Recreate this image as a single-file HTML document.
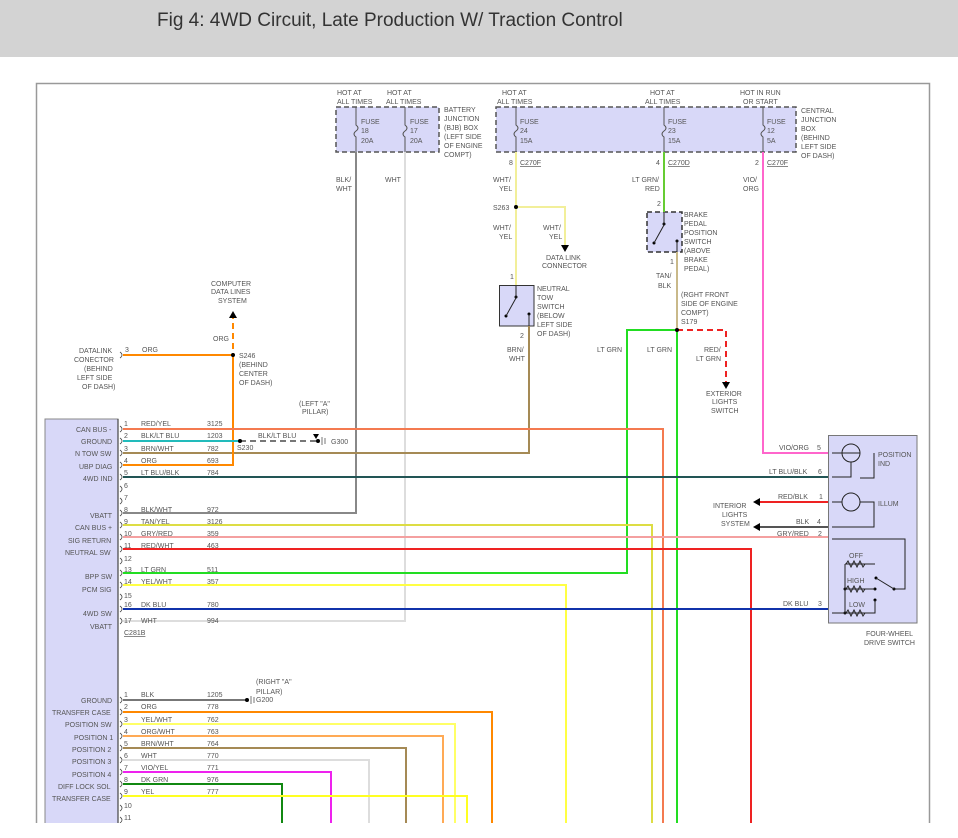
<!DOCTYPE html>
<html><head><meta charset="utf-8"><style>
html,body{margin:0;padding:0;background:#fff;width:958px;height:838px;overflow:hidden}
.hdr{position:absolute;left:0;top:0;width:958px;height:57px;background:#d3d3d3}
.hdr span{position:absolute;left:157px;top:10px;font:19px "Liberation Sans",sans-serif;color:#333;white-space:nowrap}
svg{position:absolute;left:0;top:0;display:block}
text{font-family:"Liberation Sans",sans-serif;font-size:7px;fill:#555}
</style></head><body>
<div class="hdr"><span>Fig 4: 4WD Circuit, Late Production W/ Traction Control</span></div>
<svg width="958" height="838" viewBox="0 0 958 838">
<defs><clipPath id="c"><rect x="0" y="0" width="958" height="823"/></clipPath></defs>
<g clip-path="url(#c)">
<path d="M36.5 838 V83.5 H929.5 V838" fill="none" stroke="#999" stroke-width="1.5"/>
<rect x="336" y="107" width="103" height="45" fill="#d8d8f8" stroke="#555" stroke-dasharray="5,3" stroke-width="1.5"/>
<rect x="496" y="107" width="300" height="45" fill="#d8d8f8" stroke="#555" stroke-dasharray="5,3" stroke-width="1.5"/>
<rect x="647" y="212" width="35" height="40" fill="#d8d8f8" stroke="#333" stroke-dasharray="5,3" stroke-width="1.5"/>
<rect x="499.5" y="285.5" width="34.5" height="40.5" fill="#d8d8f8" stroke="#333" stroke-width="1"/>
<rect x="45" y="419" width="73" height="419" fill="#d8d8f8" stroke="#888" stroke-width="1"/>
<line x1="118" y1="419" x2="118" y2="838" stroke="#444" stroke-width="1.2"/>
<rect x="828.5" y="435.5" width="88.5" height="187.5" fill="#d8d8f8" stroke="#777" stroke-width="1"/>
<g stroke="#555" stroke-width="1" fill="none">
<path d="M356 107 V125 q4 3 0 6 q-4 3 0 6 V152"/>
<path d="M405 107 V125 q4 3 0 6 q-4 3 0 6 V152"/>
<path d="M516 107 V125 q4 3 0 6 q-4 3 0 6 V152"/>
<path d="M664 107 V125 q4 3 0 6 q-4 3 0 6 V152"/>
<path d="M763 107 V125 q4 3 0 6 q-4 3 0 6 V152"/>
</g>
<g fill="none" stroke-width="2">
<path d="M356 152 V513 H123" stroke="#888"/>
<path d="M405 152 V621 H123" stroke="#ddd"/>
<path d="M516 152 V285" stroke="#f2ef9a"/>
<path d="M516 207 H565 V245" stroke="#f2ef9a"/>
<path d="M664 152 V212" stroke="#6c3"/>
<path d="M763 152 V453 H828" stroke="#f6c"/>
<path d="M529 326 V453 H123" stroke="#a58a55"/>
<path d="M677 252 V330" stroke="#c9b98a"/>
<path d="M677 330 V838" stroke="#2d2"/>
<path d="M677 330 H627 V573 H123" stroke="#2d2"/>
<path d="M677 330 H726 V382" stroke="#e22" stroke-dasharray="6,4"/>
<path d="M233 313 V355" stroke="#f80" stroke-dasharray="6,4"/>
<path d="M123 355 H233 V465 H123" stroke="#f80"/>
<path d="M123 429 H663 V838" stroke="#f47a50"/>
<path d="M123 441 H240" stroke="#2bb"/>
<path d="M240 441 H318" stroke="#777" stroke-dasharray="6,4"/>
<path d="M123 477 H828" stroke="#255"/>
<path d="M123 525 H652 V838" stroke="#dd4"/>
<path d="M123 537 H828" stroke="#f4a0a0"/>
<path d="M123 549 H751 V838" stroke="#e22"/>
<path d="M123 585 H566 V838" stroke="#ff4"/>
<path d="M123 609 H828" stroke="#13a"/>
<path d="M760 502 H828" stroke="#e22"/>
<path d="M760 527 H828" stroke="#555"/>
<path d="M123 700 H247" stroke="#777"/>
<path d="M123 712 H492 V838" stroke="#f80"/>
<path d="M123 724 H455 V838" stroke="#ff6"/>
<path d="M123 736 H443 V838" stroke="#fa5"/>
<path d="M123 748 H406 V838" stroke="#a58a55"/>
<path d="M123 760 H369 V838" stroke="#ddd"/>
<path d="M123 772 H331 V838" stroke="#e2e"/>
<path d="M123 784 H282 V838" stroke="#181"/>
<path d="M123 796 H467 V838" stroke="#ff2"/>
</g>
<g fill="#000">
<circle cx="516" cy="207" r="2"/><circle cx="233" cy="355" r="2"/><circle cx="677" cy="330" r="2"/>
<circle cx="240" cy="441" r="2"/><circle cx="318" cy="441" r="2"/><circle cx="247" cy="700" r="2"/>
<path d="M561 245 h8 l-4 7z"/><path d="M722 382 h8 l-4 7z"/><path d="M229 318 h8 l-4 -7z"/>
<path d="M313 434 h6 l-3 5z"/>
<path d="M760 498 v8 l-7 -4z"/><path d="M760 523 v8 l-7 -4z"/>
<circle cx="516" cy="297" r="1.5"/><circle cx="506" cy="316" r="1.5"/><circle cx="529" cy="314" r="1.5"/>
<circle cx="664" cy="224" r="1.5"/><circle cx="654" cy="243" r="1.5"/><circle cx="677" cy="241" r="1.5"/>
<circle cx="845" cy="589" r="1.5"/><circle cx="845" cy="613" r="1.5"/><circle cx="875" cy="589" r="1.5"/><circle cx="876" cy="578" r="1.5"/><circle cx="894" cy="589" r="1.5"/><circle cx="875" cy="600" r="1.5"/>
</g>
<path d="M322 437 v8 M325 438 v6 M251 696 v8 M254 697 v6" stroke="#777"/>
<g stroke="#222" stroke-width="1" fill="none">
<path d="M516 286 v12 l-10 18 M529 326 v-12"/><path d="M664 213 v12 l-10 18 M677 252 v-12"/>
<circle cx="851" cy="453" r="9"/><circle cx="851" cy="502" r="9"/>
<path d="M832 453 h28 M851 462 V477 H832 M874 453 V478 H860 M832 502 h10 M860 502 h14 V527 H832"/>
<path d="M832 539 H905 V589 H894 L876 578 M845 564 H875 M845 564 V613 M845 589 H875 M845 613 H875 V600 M832 613 H845"/>
<path d="M846 564 l2 -3 l3 6 l3 -6 l3 6 l3 -6 l3 6 l2 -3 M846 589 l2 -3 l3 6 l3 -6 l3 6 l3 -6 l3 6 l2 -3 M846 613 l2 -3 l3 6 l3 -6 l3 6 l3 -6 l3 6 l2 -3"/>
</g>
<g stroke="#444" fill="none" stroke-width="0.8">
<path d="M120 426 q4 3 0 6 M120 438 q4 3 0 6 M120 450 q4 3 0 6 M120 462 q4 3 0 6 M120 474 q4 3 0 6 M120 486 q4 3 0 6 M120 498 q4 3 0 6 M120 510 q4 3 0 6 M120 522 q4 3 0 6 M120 534 q4 3 0 6 M120 546 q4 3 0 6 M120 558 q4 3 0 6 M120 570 q4 3 0 6 M120 582 q4 3 0 6 M120 594 q4 3 0 6 M120 606 q4 3 0 6 M120 618 q4 3 0 6"/>
<path d="M120 697 q4 3 0 6 M120 709 q4 3 0 6 M120 721 q4 3 0 6 M120 733 q4 3 0 6 M120 745 q4 3 0 6 M120 757 q4 3 0 6 M120 769 q4 3 0 6 M120 781 q4 3 0 6 M120 793 q4 3 0 6 M120 805 q4 3 0 6 M120 817 q4 3 0 6 M120 352 q4 3 0 6"/>
</g>
</g>
<g>
<text x="337" y="95">HOT AT</text><text x="337" y="104">ALL TIMES</text>
<text x="387" y="95">HOT AT</text><text x="386" y="104">ALL TIMES</text>
<text x="502" y="95">HOT AT</text><text x="497" y="104">ALL TIMES</text>
<text x="650" y="95">HOT AT</text><text x="645" y="104">ALL TIMES</text>
<text x="740" y="95">HOT IN RUN</text><text x="743" y="104">OR START</text>
<text x="361" y="124">FUSE</text><text x="361" y="133">18</text><text x="361" y="143">20A</text>
<text x="410" y="124">FUSE</text><text x="410" y="133">17</text><text x="410" y="143">20A</text>
<text x="520" y="124">FUSE</text><text x="520" y="133">24</text><text x="520" y="143">15A</text>
<text x="668" y="124">FUSE</text><text x="668" y="133">23</text><text x="668" y="143">15A</text>
<text x="767" y="124">FUSE</text><text x="767" y="133">12</text><text x="767" y="143">5A</text>
<text x="444" y="112">BATTERY</text><text x="444" y="121">JUNCTION</text><text x="444" y="130">(BJB) BOX</text><text x="444" y="139">(LEFT SIDE</text><text x="444" y="148">OF ENGINE</text><text x="444" y="157">COMPT)</text>
<text x="801" y="113">CENTRAL</text><text x="801" y="122">JUNCTION</text><text x="801" y="131">BOX</text><text x="801" y="140">(BEHIND</text><text x="801" y="149">LEFT SIDE</text><text x="801" y="158">OF DASH)</text>
<text x="509" y="165">8</text><text x="520" y="165" text-decoration="underline">C270F</text>
<text x="656" y="165">4</text><text x="668" y="165" text-decoration="underline">C270D</text>
<text x="755" y="165">2</text><text x="767" y="165" text-decoration="underline">C270F</text>
<text x="336" y="182">BLK/</text><text x="336" y="191">WHT</text><text x="385" y="182">WHT</text>
<text x="493" y="182">WHT/</text><text x="499" y="191">YEL</text>
<text x="632" y="182">LT GRN/</text><text x="645" y="191">RED</text>
<text x="743" y="182">VIO/</text><text x="743" y="191">ORG</text>
<text x="493" y="210">S263</text>
<text x="493" y="230">WHT/</text><text x="499" y="239">YEL</text><text x="543" y="230">WHT/</text><text x="549" y="239">YEL</text>
<text x="546" y="260">DATA LINK</text><text x="542" y="268">CONNECTOR</text>
<text x="657" y="206">2</text><text x="684" y="217">BRAKE</text><text x="684" y="226">PEDAL</text><text x="684" y="235">POSITION</text><text x="684" y="244">SWITCH</text><text x="684" y="253">(ABOVE</text><text x="684" y="262">BRAKE</text><text x="684" y="271">PEDAL)</text>
<text x="670" y="264">1</text><text x="656" y="278">TAN/</text><text x="658" y="288">BLK</text>
<text x="681" y="297">(RGHT FRONT</text><text x="681" y="306">SIDE OF ENGINE</text><text x="681" y="315">COMPT)</text><text x="681" y="324">S179</text>
<text x="510" y="279">1</text><text x="537" y="291">NEUTRAL</text><text x="537" y="300">TOW</text><text x="537" y="309">SWITCH</text><text x="537" y="318">(BELOW</text><text x="537" y="327">LEFT SIDE</text><text x="537" y="336">OF DASH)</text>
<text x="520" y="338">2</text><text x="507" y="352">BRN/</text><text x="509" y="361">WHT</text>
<text x="597" y="352">LT GRN</text><text x="647" y="352">LT GRN</text><text x="704" y="352">RED/</text><text x="696" y="361">LT GRN</text>
<text x="706" y="396">EXTERIOR</text><text x="712" y="404">LIGHTS</text><text x="711" y="413">SWITCH</text>
<text x="211" y="286">COMPUTER</text><text x="211" y="294">DATA LINES</text><text x="218" y="303">SYSTEM</text>
<text x="213" y="341">ORG</text><text x="142" y="352">ORG</text><text x="125" y="352">3</text>
<text x="79" y="353">DATALINK</text><text x="74" y="362">CONECTOR</text><text x="84" y="371">(BEHIND</text><text x="77" y="380">LEFT SIDE</text><text x="82" y="389">OF DASH)</text>
<text x="239" y="358">S246</text><text x="239" y="367">(BEHIND</text><text x="239" y="376">CENTER</text><text x="239" y="385">OF DASH)</text>
<text x="299" y="406">(LEFT "A"</text><text x="302" y="414">PILLAR)</text>
<text x="258" y="438">BLK/LT BLU</text><text x="237" y="450">S230</text><text x="331" y="444">G300</text>
</g>
<g>
<text x="76" y="432">CAN BUS -</text><text x="81" y="444">GROUND</text><text x="75" y="456">N TOW SW</text><text x="79" y="469">UBP DIAG</text><text x="83" y="481">4WD IND</text>
<text x="90" y="518">VBATT</text><text x="75" y="530">CAN BUS +</text><text x="68" y="543">SIG RETURN</text><text x="65" y="555">NEUTRAL SW</text>
<text x="85" y="579">BPP SW</text><text x="82" y="592">PCM SIG</text><text x="83" y="616">4WD SW</text><text x="90" y="629">VBATT</text>
<text x="124" y="426">1</text><text x="141" y="426">RED/YEL</text><text x="207" y="426">3125</text>
<text x="124" y="438">2</text><text x="141" y="438">BLK/LT BLU</text><text x="207" y="438">1203</text>
<text x="124" y="451">3</text><text x="141" y="451">BRN/WHT</text><text x="207" y="451">782</text>
<text x="124" y="463">4</text><text x="141" y="463">ORG</text><text x="207" y="463">693</text>
<text x="124" y="475">5</text><text x="141" y="475">LT BLU/BLK</text><text x="207" y="475">784</text>
<text x="124" y="488">6</text><text x="124" y="500">7</text>
<text x="124" y="512">8</text><text x="141" y="512">BLK/WHT</text><text x="207" y="512">972</text>
<text x="124" y="524">9</text><text x="141" y="524">TAN/YEL</text><text x="207" y="524">3126</text>
<text x="124" y="536">10</text><text x="141" y="536">GRY/RED</text><text x="207" y="536">359</text>
<text x="124" y="548">11</text><text x="141" y="548">RED/WHT</text><text x="207" y="548">463</text>
<text x="124" y="561">12</text>
<text x="124" y="572">13</text><text x="141" y="572">LT GRN</text><text x="207" y="572">511</text>
<text x="124" y="584">14</text><text x="141" y="584">YEL/WHT</text><text x="207" y="584">357</text>
<text x="124" y="598">15</text>
<text x="124" y="607">16</text><text x="141" y="607">DK BLU</text><text x="207" y="607">780</text>
<text x="124" y="623">17</text><text x="141" y="623">WHT</text><text x="207" y="623">994</text>
<text x="124" y="635" text-decoration="underline">C281B</text>
</g>
<g>
<text x="81" y="703">GROUND</text><text x="52" y="715">TRANSFER CASE</text><text x="65" y="727">POSITION SW</text><text x="74" y="740">POSITION 1</text><text x="72" y="752">POSITION 2</text><text x="72" y="764">POSITION 3</text><text x="72" y="777">POSITION 4</text><text x="58" y="789">DIFF LOCK SOL</text><text x="52" y="801">TRANSFER CASE</text>
<text x="124" y="697">1</text><text x="141" y="697">BLK</text><text x="207" y="697">1205</text>
<text x="124" y="709">2</text><text x="141" y="709">ORG</text><text x="207" y="709">778</text>
<text x="124" y="722">3</text><text x="141" y="722">YEL/WHT</text><text x="207" y="722">762</text>
<text x="124" y="734">4</text><text x="141" y="734">ORG/WHT</text><text x="207" y="734">763</text>
<text x="124" y="746">5</text><text x="141" y="746">BRN/WHT</text><text x="207" y="746">764</text>
<text x="124" y="758">6</text><text x="141" y="758">WHT</text><text x="207" y="758">770</text>
<text x="124" y="770">7</text><text x="141" y="770">VIO/YEL</text><text x="207" y="770">771</text>
<text x="124" y="782">8</text><text x="141" y="782">DK GRN</text><text x="207" y="782">976</text>
<text x="124" y="794">9</text><text x="141" y="794">YEL</text><text x="207" y="794">777</text>
<text x="124" y="808">10</text><text x="124" y="820">11</text>
<text x="256" y="684">(RIGHT "A"</text><text x="256" y="694">PILLAR)</text><text x="256" y="702">G200</text>
</g>
<g>
<text x="779" y="450">VIO/ORG</text><text x="817" y="450">5</text>
<text x="769" y="474">LT BLU/BLK</text><text x="818" y="474">6</text>
<text x="778" y="499">RED/BLK</text><text x="819" y="499">1</text>
<text x="796" y="524">BLK</text><text x="817" y="524">4</text>
<text x="777" y="536">GRY/RED</text><text x="818" y="536">2</text>
<text x="783" y="606">DK BLU</text><text x="818" y="606">3</text>
<text x="713" y="508">INTERIOR</text><text x="722" y="517">LIGHTS</text><text x="721" y="526">SYSTEM</text>
<text x="878" y="457">POSITION</text><text x="878" y="466">IND</text><text x="878" y="506">ILLUM</text>
<text x="849" y="558">OFF</text><text x="847" y="583">HIGH</text><text x="849" y="607">LOW</text>
<text x="866" y="636">FOUR-WHEEL</text><text x="864" y="645">DRIVE SWITCH</text>
</g>
</svg>
</body></html>
